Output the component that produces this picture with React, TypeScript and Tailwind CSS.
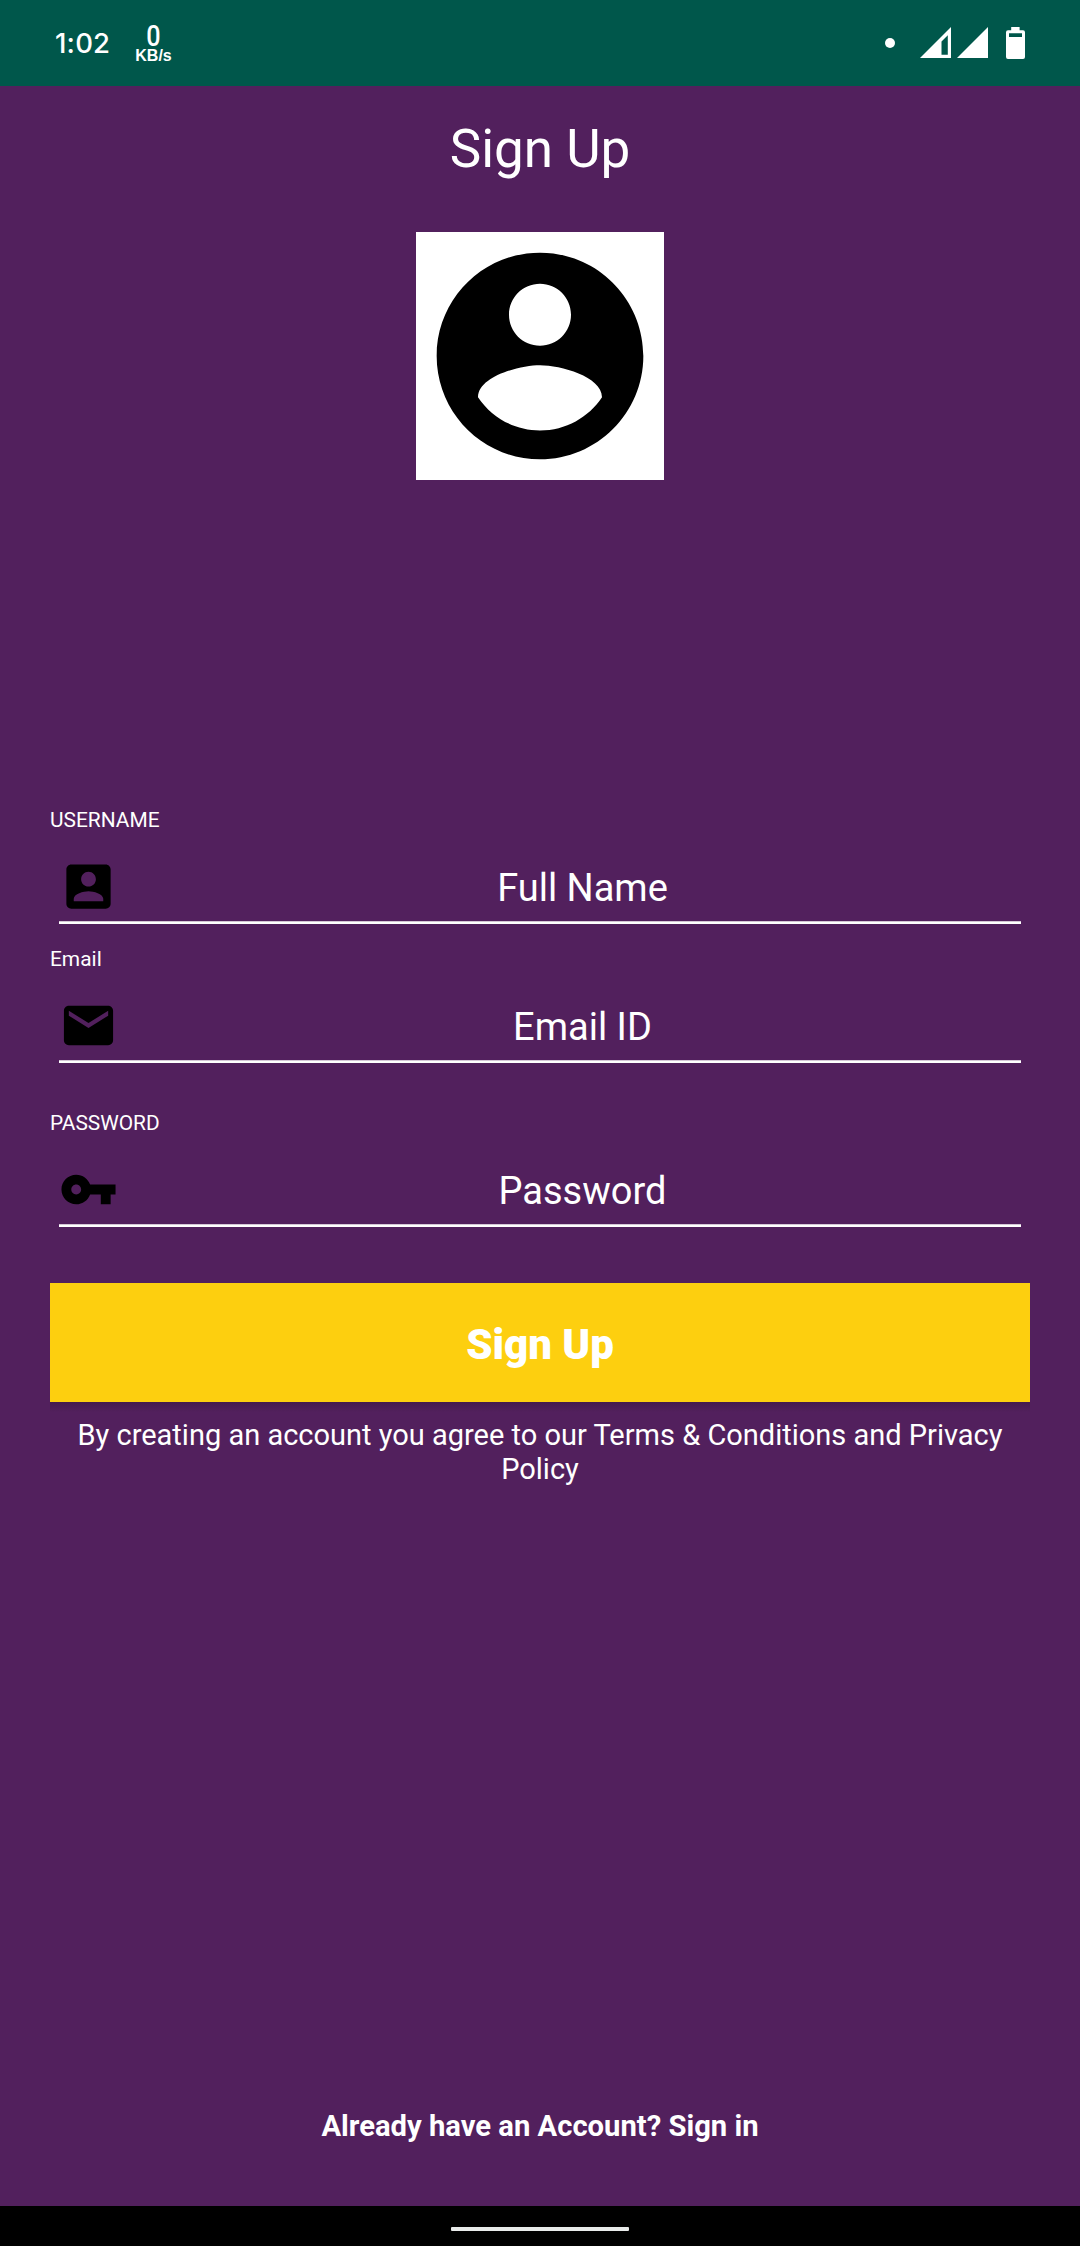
import type { ReactNode } from "react";

function Icon({ className, children }: { className: string; children: ReactNode }) {
  return (
    <svg viewBox="0 0 24 24" className={className} fill="currentColor" aria-hidden="true">
      {children}
    </svg>
  );
}

function StatusBar() {
  return (
    <header className="flex h-[86px] shrink-0 items-start justify-between bg-[#00574b] text-white">
      <div className="flex pl-[55px]">
        <span className="mt-[26px] w-[80px] font-['Inter'] text-[27.5px] leading-[34px] font-medium tracking-[0.2px]">
          1:02
        </span>
        <div className="mt-[21px] flex w-[37px] flex-col items-center font-bold">
          <span className="scale-x-[0.84] font-['Roboto'] text-[30px] leading-[29px] font-medium">0</span>
          <span className="font-['Liberation_Sans'] text-[16px] leading-[12px]">KB/s</span>
        </div>
      </div>
      <svg className="h-[86px] w-[200px]" viewBox="880 0 200 86" fill="#fff" aria-hidden="true">
        <circle cx="890" cy="43" r="5" />
        <path
          fillRule="evenodd"
          d="M951 27V58H920ZM947.8 35.2L941.5 41.5V54.7H947.8Z"
        />
        <path d="M988 27V58H957Z" />
        <path
          fillRule="evenodd"
          d="M1011.2 27h8.4v3.2h3.4a2 2 0 0 1 2 2v24.8a2 2 0 0 1-2 2h-15a2 2 0 0 1-2-2v-24.8a2 2 0 0 1 2-2h3.2ZM1009 33.3v3.7h13v-3.7Z"
        />
      </svg>
    </header>
  );
}

function Field({
  label,
  hint,
  className,
  children,
}: {
  label: string;
  hint: string;
  className?: string;
  children: ReactNode;
}) {
  return (
    <div className={className}>
      <div className="h-[24px] text-[20.9px] leading-[24px]">{label}</div>
      <div className="mx-[9px] mt-[25px] flex h-[64px] items-start">
        <Icon className="h-[59px] w-[59px] shrink-0 text-black">{children}</Icon>
        <div className="ml-[26px] flex-1 pt-[3px] text-center text-[38px] leading-[56px]">{hint}</div>
      </div>
      <div className="mx-[9px] h-[3px] border-t border-[#d4c7d6] bg-white" />
    </div>
  );
}

export default function App() {
  return (
    <div className="flex h-[2246px] w-[1080px] flex-col bg-[#52205d] font-['Roboto',sans-serif] text-white">
      <StatusBar />
      <main className="flex flex-1 flex-col px-[50px]">
        <h1 className="mt-[33px] text-center text-[53px] leading-[60px]">Sign Up</h1>
        <div className="mx-auto mt-[53px] h-[248px] w-[248px] bg-white text-black">
          <Icon className="h-[248px] w-[248px]">
            <path d="M12 2C6.48 2 2 6.48 2 12s4.48 10 10 10 10-4.48 10-10S17.52 2 12 2zm0 3c1.66 0 3 1.34 3 3s-1.34 3-3 3-3-1.34-3-3 1.34-3 3-3zm0 14.2c-2.5 0-4.71-1.28-6-3.22.03-1.99 4-3.08 6-3.08 1.99 0 5.97 1.09 6 3.08-1.29 1.94-3.5 3.22-6 3.22z" />
          </Icon>
        </div>

        <Field className="mt-[328px]" label="USERNAME" hint="Full Name">
          <path d="M3 5v14c0 1.1.89 2 2 2h14c1.1 0 2-.9 2-2V5c0-1.1-.9-2-2-2H5c-1.11 0-2 .9-2 2zm12 4c0 1.66-1.34 3-3 3s-3-1.34-3-3 1.34-3 3-3 3 1.34 3 3zm-9 8c0-2 4-3.1 6-3.1s6 1.1 6 3.1v1H6v-1z" />
        </Field>
        <Field className="mt-[23px]" label="Email" hint="Email ID">
          <path d="M20 4H4c-1.1 0-1.99.9-1.99 2L2 18c0 1.1.9 2 2 2h16c1.1 0 2-.9 2-2V6c0-1.1-.9-2-2-2zm0 4l-8 5-8-5V6l8 5 8-5v2z" />
        </Field>
        <Field className="mt-[48px]" label="PASSWORD" hint="Password">
          <path d="M12.65 10C11.83 7.67 9.61 6 7 6c-3.31 0-6 2.69-6 6s2.69 6 6 6c2.61 0 4.83-1.67 5.65-4H17v4h4v-4h2v-4H12.65zM7 14c-1.1 0-2-.9-2-2s.9-2 2-2 2 .9 2 2-.9 2-2 2z" />
        </Field>

        <button className="mt-[56px] h-[119px] w-full bg-[#fdcf0f] pt-[4px] text-[42px] leading-[48px] font-black">
          Sign Up
        </button>
        <div className="h-[10px] bg-gradient-to-b from-[#451a4e] to-[#52205d]" />
        <p className="mt-[6px] text-center text-[29px] leading-[34px]">
          By creating an account you agree to our Terms &amp; Conditions and Privacy Policy
        </p>
        <p className="mt-auto mb-[63px] text-center text-[29.2px] leading-[34px] font-bold">
          Already have an Account? Sign in
        </p>
      </main>
      <footer className="flex h-[40px] shrink-0 justify-center bg-black pt-[21px]">
        <div className="h-[4px] w-[178px] rounded-[1px] bg-[#e8ebea]" />
      </footer>
    </div>
  );
}
